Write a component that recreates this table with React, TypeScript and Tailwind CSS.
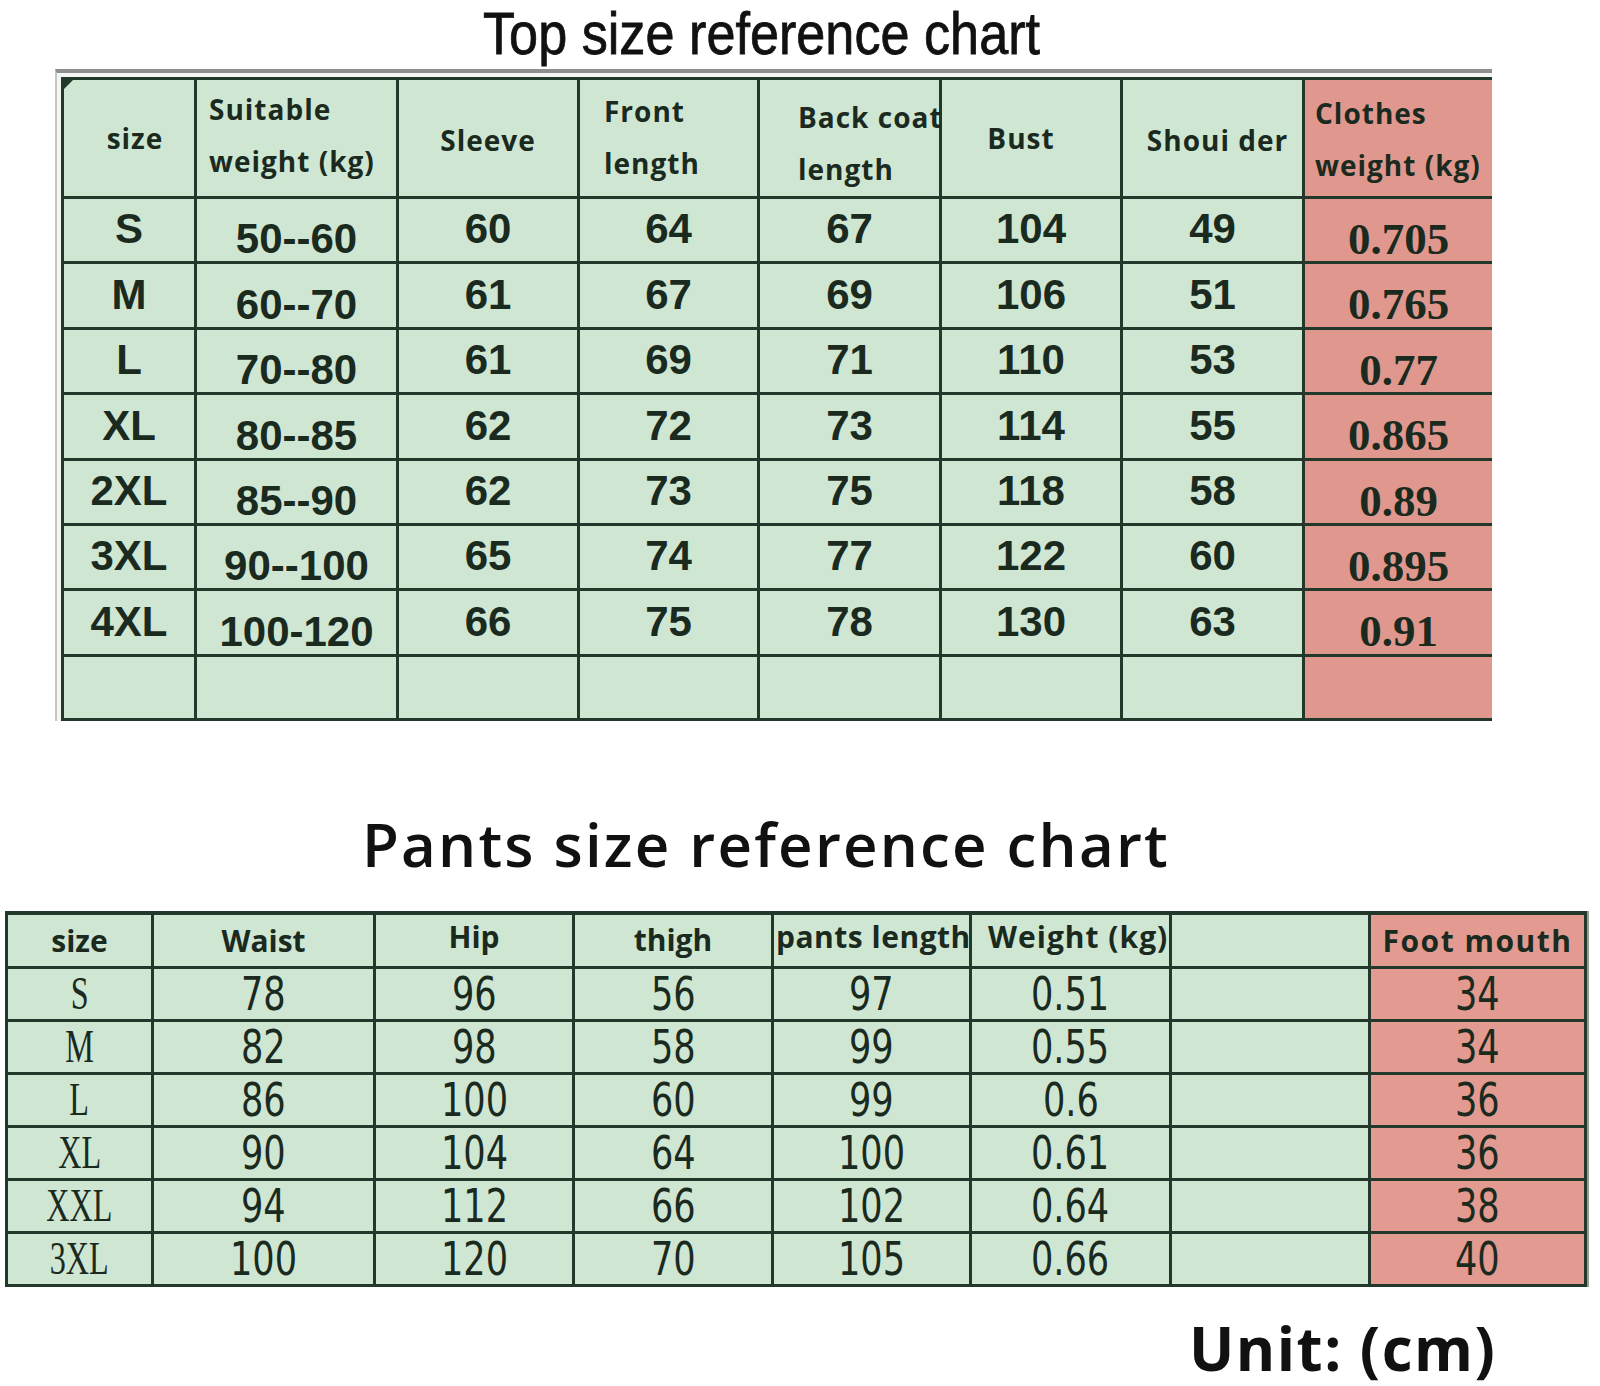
import React from "react";

type Cell = string;

const topHeader = [
  { lines: ["size"], cls: "justify-center items-center pl-3" },
  { lines: ["Suitable", "weight (kg)"], cls: "justify-center items-start pl-[12px] pb-[6px]" },
  { lines: ["Sleeve"], cls: "justify-center items-center pt-[4px]" },
  { lines: ["Front", "length"], cls: "justify-center items-start pl-[24px] pb-[2px]" },
  { lines: ["Back coat", "length"], cls: "relative z-10 justify-center items-start pl-[38px] pt-[10px]" },
  { lines: ["Bust"], cls: "justify-center items-center pr-[20px]" },
  { lines: ["Shoui der"], cls: "justify-center items-center pl-[10px] pt-[4px]" },
  { lines: ["Clothes", "weight (kg)"], cls: "justify-center items-start pl-[10px] pt-[2px]" },
];

const topData: Cell[][] = [
  ["S", "50--60", "60", "64", "67", "104", "49", "0.705"],
  ["M", "60--70", "61", "67", "69", "106", "51", "0.765"],
  ["L", "70--80", "61", "69", "71", "110", "53", "0.77"],
  ["XL", "80--85", "62", "72", "73", "114", "55", "0.865"],
  ["2XL", "85--90", "62", "73", "75", "118", "58", "0.89"],
  ["3XL", "90--100", "65", "74", "77", "122", "60", "0.895"],
  ["4XL", "100-120", "66", "75", "78", "130", "63", "0.91"],
  ["", "", "", "", "", "", "", ""],
];

const pantsHeader = [
  { text: "size", cls: "justify-center" },
  { text: "Waist", cls: "justify-center" },
  { text: "Hip", cls: "justify-center pb-[8px]" },
  { text: "thigh", cls: "justify-center pb-[2px]" },
  { text: "pants length", cls: "relative z-10 justify-start pl-[2px] pb-[8px] tracking-[0.5px]" },
  { text: "Weight (kg)", cls: "relative z-10 justify-start pl-[16px] pb-[8px] tracking-[1px]" },
  { text: "", cls: "" },
  { text: "Foot mouth", cls: "justify-center tracking-[1.5px]" },
];

const pantsData: Cell[][] = [
  ["S", "78", "96", "56", "97", "0.51", "", "34"],
  ["M", "82", "98", "58", "99", "0.55", "", "34"],
  ["L", "86", "100", "60", "99", "0.6", "", "36"],
  ["XL", "90", "104", "64", "100", "0.61", "", "36"],
  ["XXL", "94", "112", "66", "102", "0.64", "", "38"],
  ["3XL", "100", "120", "70", "105", "0.66", "", "40"],
];

// grid lines: every cell draws its right and bottom edge
const line = "border-r-[3px] border-b-[3px] border-[#22382a]";
const lineLast = "border-b-[3px] border-[#22382a]";

function TopChart() {
  return (
    <div className="ml-[55px] w-[1437px] shrink-0 border-t-4 border-l-2 border-t-[#8d8f8d] border-l-[#c4c7c4] bg-[#f4f6f4] pt-[4px] pl-[4px]">
      <div className="grid grid-cols-[133px_202px_181px_180px_182px_181px_182px_187px] grid-rows-[119px_65px_66px_65px_66px_65px_65px_66px_64px] border-t-[3px] border-l-[3px] border-[#22382a] text-[#1b2a1f]">
        {topHeader.map((h, i) => (
          <div
            key={i}
            className={`relative flex flex-col ${h.cls} ${i === 7 ? `${lineLast} bg-[#e0988e]` : `${line} bg-[#cfe7d2]`} whitespace-nowrap font-['Open_Sans',sans-serif] text-[28px] font-bold leading-[52px] tracking-[1px]`}
          >
            {i === 0 && (
              <span className="absolute left-0 top-0 h-0 w-0 border-t-[9px] border-r-[9px] border-t-[#22382a] border-r-transparent" />
            )}
            {h.lines.map((t) => (
              <span key={t}>{t}</span>
            ))}
          </div>
        ))}
        {topData.map((row, r) =>
          row.map((v, c) => {
            const pink = c === 7;
            const low = c === 1 || c === 7;
            return (
              <div
                key={`${r}-${c}`}
                className={`flex items-center justify-center ${pink ? `${lineLast} bg-[#e0988e]` : `${line} bg-[#cfe7d2]`} ${low ? "pt-[18px]" : "pb-[2px]"} ${pink ? "font-['Liberation_Serif',serif] text-[45px]" : "font-['Liberation_Sans',sans-serif] text-[42px]"} font-bold leading-none`}
              >
                {v}
              </div>
            );
          })
        )}
      </div>
    </div>
  );
}

function PantsChart() {
  return (
    <div className="ml-[5px] w-[1584px] shrink-0 border-r-2 border-r-[#9a9c9a]">
      <div className="grid grid-cols-[146px_222px_199px_199px_198px_200px_199px_216px] grid-rows-[54px_53px_53px_53px_53px_53px_53px] border-t-4 border-l-[3px] border-[#22382a] text-[#1b2a1f]">
        {pantsHeader.map((h, i) => (
          <div
            key={i}
            className={`flex items-center ${h.cls} ${line} ${i === 7 ? "bg-[#e39b91]" : "bg-[#cfe7d2]"} whitespace-nowrap font-['Open_Sans',sans-serif] text-[30px] font-bold leading-none`}
          >
            {h.text}
          </div>
        ))}
        {pantsData.map((row, r) =>
          row.map((v, c) => (
            <div
              key={`${r}-${c}`}
              className={`flex items-center justify-center ${line} ${c === 7 ? "bg-[#e39b91]" : "bg-[#cfe7d2]"} leading-none`}
            >
              {c === 0 ? (
                <span className="inline-block scale-x-70 font-['Liberation_Serif',serif] text-[46px]">{v}</span>
              ) : (
                <span className="inline-block scale-x-85 font-['DejaVu_Sans_Condensed','Liberation_Sans',sans-serif] text-[46px]">{v}</span>
              )}
            </div>
          ))
        )}
      </div>
    </div>
  );
}

export default function App() {
  return (
    <div className="flex min-h-[1386px] w-[1600px] flex-col bg-white text-[#111]">
      <h1 className="h-[69px] shrink-0 pl-[483px] font-['Liberation_Sans',sans-serif] text-[60px] font-normal leading-[67px] [-webkit-text-stroke:0.8px_#111]">
        <span className="inline-block origin-left scale-x-87">Top size reference chart</span>
      </h1>
      <TopChart />
      <h2 className="mt-[93px] h-[97px] shrink-0 pl-[362px] font-['Open_Sans',sans-serif] text-[60px] font-semibold leading-none tracking-[2.2px]">
        Pants size reference chart
      </h2>
      <PantsChart />
      <div className="mt-[23px] h-[76px] shrink-0 pl-[1189px] font-['Open_Sans',sans-serif] text-[60px] font-bold leading-[76px] tracking-[1.5px]">
        Unit: (cm)
      </div>
    </div>
  );
}
